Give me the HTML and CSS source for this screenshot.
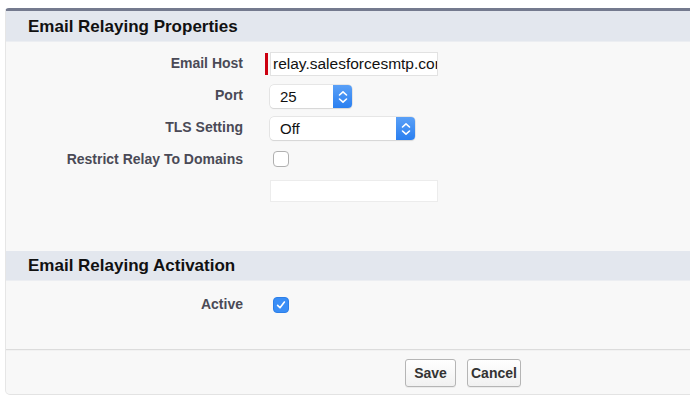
FILE: index.html
```html
<!DOCTYPE html>
<html>
<head>
<meta charset="utf-8">
<link rel="stylesheet" href="styles.css">
</head>
<body>
<div class="panel">
  <div class="section-head"><h2>Email Relaying Properties</h2></div>
  <div class="section-body props">
    <div class="row">
      <div class="label">Email Host</div>
      <div class="control">
        <span class="required"></span>
        <div class="textbox wide">relay.salesforcesmtp.com</div>
      </div>
    </div>
    <div class="row">
      <div class="label">Port</div>
      <div class="control">
        <div class="select port"><span class="value">25</span><span class="arrow"><svg width="10" height="14" viewBox="0 0 10 14"><path d="M1.5 5 L5 1.8 L8.5 5 M1.5 9 L5 12.2 L8.5 9" fill="none" stroke="#fff" stroke-width="1.6" stroke-linecap="round" stroke-linejoin="round"/></svg></span></div>
      </div>
    </div>
    <div class="row">
      <div class="label">TLS Setting</div>
      <div class="control">
        <div class="select tls"><span class="value">Off</span><span class="arrow"><svg width="10" height="14" viewBox="0 0 10 14"><path d="M1.5 5 L5 1.8 L8.5 5 M1.5 9 L5 12.2 L8.5 9" fill="none" stroke="#fff" stroke-width="1.6" stroke-linecap="round" stroke-linejoin="round"/></svg></span></div>
      </div>
    </div>
    <div class="row">
      <div class="label">Restrict Relay To Domains</div>
      <div class="control">
        <span class="checkbox"></span>
      </div>
    </div>
    <div class="row short">
      <div class="label"></div>
      <div class="control">
        <div class="textbox wide empty"></div>
      </div>
    </div>
  </div>
  <div class="section-head second"><h2>Email Relaying Activation</h2></div>
  <div class="section-body activation">
    <div class="row">
      <div class="label">Active</div>
      <div class="control">
        <span class="checkbox checked"><svg width="12" height="12" viewBox="0 0 12 12"><path d="M2.6 6.4 L5 8.8 L9.4 3" fill="none" stroke="#fff" stroke-width="1.6" stroke-linecap="round" stroke-linejoin="round"/></svg></span>
      </div>
    </div>
  </div>
  <div class="footer">
    <button class="btn">Save</button>
    <button class="btn">Cancel</button>
  </div>
</div>
</body>
</html>
```
FILE: styles.css
```css
html, body {
  margin: 0;
  padding: 0;
  background: #ffffff;
  overflow: hidden;
}
body {
  padding: 8px 0 0 5px;
  font-family: "Liberation Sans", Arial, Helvetica, sans-serif;
  color: #000;
}
.panel {
  width: 900px;
  background: #f8f8f8;
  border-top: 3px solid #747a8e;
  border-left: 1px solid #e6e6e6;
  border-bottom: 1px solid #e3e3e3;
  border-radius: 4px 0 0 5px;
}
.section-head {
  height: 31px;
  background: #e3e7ee;
  border-bottom: 1px solid #eceef2;
  box-sizing: border-box;
  display: flex;
  align-items: center;
  padding-left: 22px;
}
.section-head.second {
  height: 30px;
}
.section-head h2 {
  margin: 0;
  font-size: 17px;
  font-weight: bold;
  color: #111;
  padding-top: 1px;
}
.section-body {
  display: flex;
  flex-direction: column;
  gap: 8px;
}
.props {
  padding: 10px 0 49px 0;
}
.activation {
  padding: 15px 0 29px 0;
  border-bottom: 1px solid #dcdcdc;
}
.row {
  display: flex;
  height: 24px;
}
.row.short {
  height: 22px;
}
.label {
  width: 237px;
  text-align: right;
  font-size: 14px;
  font-weight: bold;
  color: #4a4a56;
  padding-top: 3px;
  line-height: 16px;
  box-sizing: border-box;
}
.control {
  margin-left: 22px;
  display: flex;
  align-items: flex-start;
}
.required {
  width: 3px;
  height: 22px;
  background: #cc0010;
  margin-top: 1px;
  margin-right: 2px;
}
.textbox {
  height: 24px;
  box-sizing: border-box;
  background: #fff;
  border: 1px solid #e2e2e2;
  font-size: 15.5px;
  line-height: 22px;
  padding-left: 2px;
  overflow: hidden;
  white-space: nowrap;
  color: #111;
}
.textbox.wide {
  width: 168px;
}
.textbox.empty {
  height: 22px;
  margin-left: 5px;
  border-color: #ececec;
}
.select {
  margin-left: 5px;
  margin-top: 1px;
  height: 23px;
  display: flex;
  background: #fff;
  border-radius: 4px;
  box-shadow: 0 0 0 0.5px #d4d4d4, 0 1px 1px rgba(0,0,0,0.12);
  overflow: hidden;
}
.select.port { width: 82px; }
.select.tls { width: 145px; }
.select .value {
  flex: 1;
  font-size: 15px;
  line-height: 24px;
  padding-left: 10px;
  color: #111;
}
.select .arrow {
  width: 19px;
  background: linear-gradient(#5aa0f7, #2a7ff0);
  display: flex;
  align-items: center;
  justify-content: center;
}
.checkbox {
  width: 16px;
  height: 16px;
  box-sizing: border-box;
  margin-left: 8px;
  margin-top: 3px;
  border: 1px solid #b0b0b0;
  border-radius: 4px;
  background: #fff;
  display: flex;
  align-items: center;
  justify-content: center;
}
.checkbox.checked {
  background: #3a8ef6;
  border-color: #2d7fe8;
  margin-top: 1px;
}
.activation .label {
  padding-top: 0;
}
.footer {
  height: 43px;
  border-top: 1px solid #f2f2f2;
  display: flex;
  align-items: center;
  gap: 11px;
  padding-left: 399px;
}
.btn {
  font-family: "Liberation Sans", Arial, Helvetica, sans-serif;
  font-size: 14px;
  font-weight: bold;
  color: #333;
  height: 28px;
  min-width: 51px;
  padding: 0 3px;
  border: 1px solid #b5b5b5;
  border-radius: 3px;
  background: linear-gradient(#ffffff, #f1f1f1);
  box-shadow: 0 1px 0 rgba(0,0,0,0.05);
}
```
